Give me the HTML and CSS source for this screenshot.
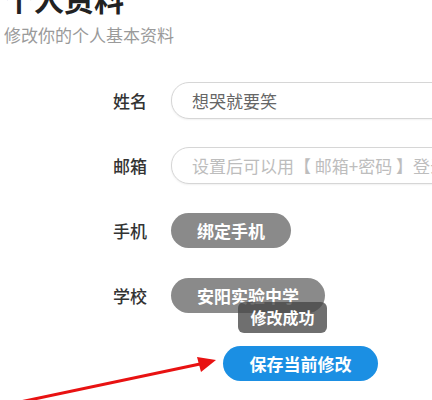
FILE: index.html
```html
<!DOCTYPE html>
<html lang="zh-CN">
<head>
  <meta charset="UTF-8">
  <meta name="viewport" content="width=device-width, initial-scale=1.0">
  <title>个人资料</title>
  <link rel="stylesheet" href="styles.css">
</head>
<body>
  <div class="page">
    <h1 class="title">个人资料</h1>
    <p class="subtitle">修改你的个人基本资料</p>

    <div class="form">
      <label class="label">姓名</label>
      <input type="text" class="field" value="想哭就要笑">

      <label class="label">邮箱</label>
      <input type="text" class="field" placeholder="设置后可以用【 邮箱+密码 】登录">

      <label class="label">手机</label>
      <div><button class="pill">绑定手机</button></div>

      <label class="label">学校</label>
      <div><button class="pill">安阳实验中学</button></div>
    </div>

    <div class="actions">
      <button class="save">保存当前修改</button>
    </div>

    <div class="toast">修改成功</div>

    <svg class="arrow" width="432" height="400" viewBox="0 0 432 400">
      <line x1="20" y1="402" x2="200" y2="364" stroke="#e81212" stroke-width="3"/>
      <polygon points="216,360 197,357 201,372" fill="#e81212"/>
    </svg>
  </div>
</body>
</html>
```

FILE: styles.css
```css
body {
  margin: 0;
  font-family: "Noto Sans CJK SC", "Noto Sans", sans-serif;
  background-color: #fff;
}
.page {
  position: relative;
  width: 432px;
  height: 400px;
  overflow: hidden;
}
.title {
  font-size: 30px;
  line-height: 30px;
  font-weight: bold;
  color: #222;
  margin: -17px 0 0 4px;
}
.subtitle {
  font-size: 17px;
  line-height: 17px;
  color: #9a9a9a;
  margin: 13px 0 0 4px;
}
.form {
  display: grid;
  grid-template-columns: 58px 300px;
  grid-auto-rows: 37px;
  row-gap: 28px;
  align-items: center;
  margin: 39px 0 0 113px;
}
.label {
  font-size: 17px;
  font-weight: 500;
  color: #333;
}
.field {
  box-sizing: border-box;
  width: 300px;
  height: 37px;
  border: 1px solid #d6d6d6;
  border-radius: 18px;
  padding: 0 20px;
  font-family: inherit;
  font-size: 17px;
  color: #666;
  outline: none;
  box-shadow: 0 1px 2px rgba(0, 0, 0, 0.06);
}
.field::placeholder {
  color: #bdbdbd;
}
.pill {
  height: 35px;
  padding: 0 26px;
  border: none;
  border-radius: 18px;
  background-color: #8a8a8a;
  color: #fff;
  font-family: inherit;
  font-size: 17px;
  font-weight: bold;
  display: block;
}
.actions {
  margin: 32px 0 0 223px;
}
.save {
  width: 155px;
  height: 35px;
  border: none;
  border-radius: 18px;
  background-color: #1b8fe3;
  color: #fff;
  font-family: inherit;
  font-size: 17px;
  font-weight: bold;
}
.toast {
  position: absolute;
  left: 238px;
  top: 302px;
  width: 89px;
  height: 31px;
  line-height: 31px;
  text-align: center;
  border-radius: 6px;
  background-color: rgba(70, 70, 70, 0.78);
  color: #fff;
  font-size: 16px;
  font-weight: bold;
}
.arrow {
  position: absolute;
  left: 0;
  top: 0;
  pointer-events: none;
}
```
